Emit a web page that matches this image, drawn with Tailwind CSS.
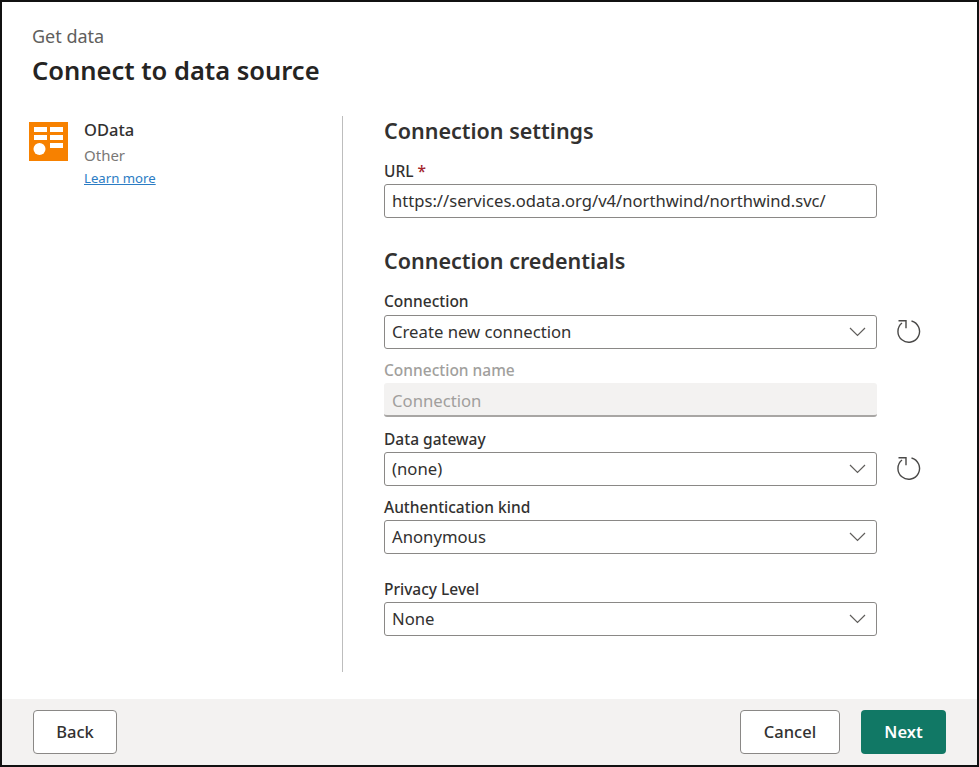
<!DOCTYPE html>
<html lang="en">
<head>
    <meta charset="UTF-8">
    <title>Connect to data source</title>
    <script src="https://cdn.jsdelivr.net/npm/@tailwindcss/browser@4"></script>
</head>
<body class="bg-white font-['Noto_Sans',sans-serif] text-[#323130]">
    <div class="w-[979px] h-[767px] flex flex-col border-2 border-[#111] overflow-hidden">
        <header class="pl-[30px] pt-[22px] h-[113px] shrink-0">
            <div class="text-[18px] leading-6 text-[#605e5c]">Get data</div>
            <h1 class="mt-[5px] text-[25.5px] leading-[34px] font-semibold text-[#252423]">Connect to data source</h1>
        </header>

        <main class="flex-1 flex min-h-0">
            <aside class="w-[341px] shrink-0 mt-[1px] h-[556px] border-r border-[#bdbdbd] pl-[27px] pt-[4px] flex items-start gap-[16px]">
                <svg class="w-[39px] h-[39px] mt-[2px] shrink-0" viewBox="0 0 39 39">
                    <rect width="39" height="39" fill="#f78100"/>
                    <rect x="5" y="5" width="13" height="5" fill="#fff"/>
                    <rect x="21" y="5" width="13" height="5" fill="#fff"/>
                    <rect x="5" y="13" width="13" height="5" fill="#fff"/>
                    <rect x="21" y="13" width="13" height="5" fill="#fff"/>
                    <rect x="21" y="21" width="13" height="5" fill="#fff"/>
                    <circle cx="10.5" cy="27" r="6" fill="#fff"/>
                </svg>
                <div>
                    <div class="text-[16.5px] leading-[20px] font-medium text-[#323130]">OData</div>
                    <div class="mt-[5px] text-[15px] leading-[20px] text-[#7a7876]">Other</div>
                    <a href="#" class="block mt-[5px] text-[13.2px] leading-[16px] text-[#2b7cc4] underline">Learn more</a>
                </div>
            </aside>

            <section class="pl-[41px] flex-1">
                <h2 class="mt-[2px] text-[21.5px] leading-[28px] font-semibold text-[#323130]">Connection settings</h2>
                <label class="block mt-[16px] text-[15.5px] leading-[20px] font-medium">URL <span class="text-[#a4262c]">*</span></label>
                <div class="mt-[3px] w-[493px] h-[34px] border border-[#8a8886] rounded-[3px] pl-[7px] flex items-center text-[16.6px]">https://services.odata.org/v4/northwind/northwind.svc/</div>

                <h2 class="mt-[29px] text-[21.5px] leading-[28px] font-semibold text-[#323130]">Connection credentials</h2>
                <label class="block mt-[16px] text-[15.5px] leading-[20px] font-medium">Connection</label>
                <div class="mt-[4px] flex items-center gap-[20px]">
                    <div class="w-[493px] h-[34px] shrink-0 border border-[#8a8886] rounded-[3px] pl-[7px] pr-[10px] flex items-center justify-between text-[16.7px]">
                        <span class="-mt-[1px]">Create new connection</span>
                        <svg class="w-[17px] h-[10px]" viewBox="0 0 17 10" fill="none" stroke="#605e5c" stroke-width="1.2"><path d="M1 1l7.5 7.5L16 1"/></svg>
                    </div>
                    <svg class="w-[24px] h-[24px] shrink-0" viewBox="0 0 24 24" fill="none" stroke="#4a4948" stroke-width="1.4"><path d="M14.5 1A10.8 10.8 0 1 1 5 3"/><path d="M1.5 .7H9v7.5"/></svg>
                </div>

                <label class="block mt-[11px] text-[15.5px] leading-[20px] font-medium text-[#a19f9d]">Connection name</label>
                <div class="mt-[3px] w-[493px] h-[34px] pt-[3px] bg-[#f3f2f1] border-b-2 border-[#a8a6a4] rounded-[3px] pl-2 flex items-center text-[16.7px] text-[#a19f9d]">Connection</div>

                <label class="block mt-[12px] text-[15.5px] leading-[20px] font-medium">Data gateway</label>
                <div class="mt-[3px] flex items-center gap-[20px]">
                    <div class="w-[493px] h-[34px] shrink-0 border border-[#8a8886] rounded-[3px] pl-[7px] pr-[10px] flex items-center justify-between text-[16.7px]">
                        <span class="-mt-[1px]">(none)</span>
                        <svg class="w-[17px] h-[10px]" viewBox="0 0 17 10" fill="none" stroke="#605e5c" stroke-width="1.2"><path d="M1 1l7.5 7.5L16 1"/></svg>
                    </div>
                    <svg class="w-[24px] h-[24px] shrink-0" viewBox="0 0 24 24" fill="none" stroke="#4a4948" stroke-width="1.4"><path d="M14.5 1A10.8 10.8 0 1 1 5 3"/><path d="M1.5 .7H9v7.5"/></svg>
                </div>

                <label class="block mt-[11px] text-[15.5px] leading-[20px] font-medium">Authentication kind</label>
                <div class="mt-[3px] w-[493px] h-[34px] border border-[#8a8886] rounded-[3px] pl-[7px] pr-[10px] flex items-center justify-between text-[16.7px]">
                    <span>Anonymous</span>
                    <svg class="w-[17px] h-[10px]" viewBox="0 0 17 10" fill="none" stroke="#605e5c" stroke-width="1.2"><path d="M1 1l7.5 7.5L16 1"/></svg>
                </div>

                <label class="block mt-[25px] text-[15.5px] leading-[20px] font-medium">Privacy Level</label>
                <div class="mt-[3px] w-[493px] h-[34px] border border-[#8a8886] rounded-[3px] pl-[7px] pr-[10px] flex items-center justify-between text-[16.7px]">
                    <span>None</span>
                    <svg class="w-[17px] h-[10px]" viewBox="0 0 17 10" fill="none" stroke="#605e5c" stroke-width="1.2"><path d="M1 1l7.5 7.5L16 1"/></svg>
                </div>
            </section>
        </main>

        <footer class="h-[66px] shrink-0 bg-[#f3f2f1] pl-[31px] pr-[31px] flex items-center justify-between">
            <button class="w-[84px] h-[44px] bg-white border border-[#8a8886] rounded-[4px] text-[16.5px] font-medium">Back</button>
            <div class="flex gap-[21px]">
                <button class="w-[100px] h-[44px] bg-white border border-[#8a8886] rounded-[4px] text-[16.5px] font-medium">Cancel</button>
                <button class="w-[85px] h-[44px] bg-[#117865] rounded-[4px] text-[16.5px] font-semibold text-white">Next</button>
            </div>
        </footer>
    </div>
</body>
</html>
